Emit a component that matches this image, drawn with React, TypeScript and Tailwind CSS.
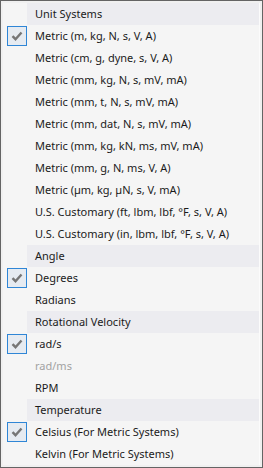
import React from 'react';

type Row =
  | { kind: 'header'; label: string }
  | { kind: 'item'; label: string; checked?: boolean; disabled?: boolean };

const rows: Row[] = [
  { kind: 'header', label: 'Unit Systems' },
  { kind: 'item', label: 'Metric (m, kg, N, s, V, A)', checked: true },
  { kind: 'item', label: 'Metric (cm, g, dyne, s, V, A)' },
  { kind: 'item', label: 'Metric (mm, kg, N, s, mV, mA)' },
  { kind: 'item', label: 'Metric (mm, t, N, s, mV, mA)' },
  { kind: 'item', label: 'Metric (mm, dat, N, s, mV, mA)' },
  { kind: 'item', label: 'Metric (mm, kg, kN, ms, mV, mA)' },
  { kind: 'item', label: 'Metric (mm, g, N, ms, V, A)' },
  { kind: 'item', label: 'Metric (\u00b5m, kg, \u00b5N, s, V, mA)' },
  { kind: 'item', label: 'U.S. Customary (ft, lbm, lbf, \u00b0F, s, V, A)' },
  { kind: 'item', label: 'U.S. Customary (in, lbm, lbf, \u00b0F, s, V, A)' },
  { kind: 'header', label: 'Angle' },
  { kind: 'item', label: 'Degrees', checked: true },
  { kind: 'item', label: 'Radians' },
  { kind: 'header', label: 'Rotational Velocity' },
  { kind: 'item', label: 'rad/s', checked: true },
  { kind: 'item', label: 'rad/ms', disabled: true },
  { kind: 'item', label: 'RPM' },
  { kind: 'header', label: 'Temperature' },
  { kind: 'item', label: 'Celsius (For Metric Systems)', checked: true },
  { kind: 'item', label: 'Kelvin (For Metric Systems)' },
];

function Check() {
  return (
    <div className="ml-[4px] flex h-[20px] w-[20px] items-center justify-center border border-[#2f86d6] bg-[#e6ebf1]">
      <svg width="12" height="10" viewBox="0 0 12 10">
        <path d="M1.5 5.2 L4.5 8.2 L10.5 1.5" fill="none" stroke="#767676" strokeWidth="2.4" />
      </svg>
    </div>
  );
}

export default function App() {
  return (
    <div
      className="h-[468px] w-[263px] overflow-hidden border border-[#646464] bg-[#f0f0f0] p-[2px] text-[11px] text-[#1b1b1b]"
      style={{ fontFamily: '"Segoe UI", "Noto Sans", sans-serif' }}
    >
      <div className="flex flex-col border-r border-[#fbfbfb] bg-[#f5f5f5]">
        {rows.map((r, i) =>
          r.kind === 'header' ? (
            <div key={i} className="flex h-[22px]">
              <div className="w-[24px] shrink-0" />
              <div className="flex flex-1 items-center bg-[#ececf0] pl-[8px]">{r.label}</div>
            </div>
          ) : (
            <div key={i} className="flex h-[22px] items-center">
              <div className="w-[32px] shrink-0">{r.checked && <Check />}</div>
              <span className={r.disabled ? 'text-[#a2a2a2]' : ''}>{r.label}</span>
            </div>
          )
        )}
      </div>
    </div>
  );
}
